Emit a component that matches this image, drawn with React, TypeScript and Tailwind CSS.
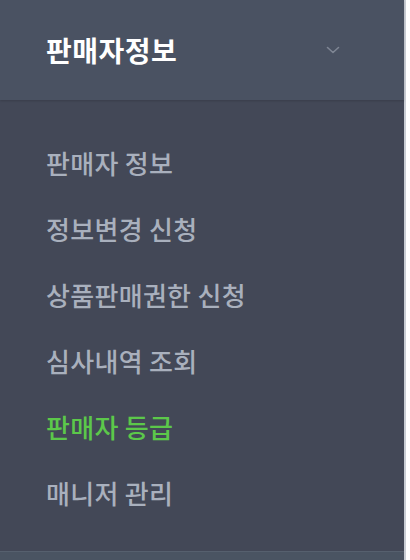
import React from "react";

const items = [
  { label: "판매자 정보", active: false },
  { label: "정보변경 신청", active: false },
  { label: "상품판매권한 신청", active: false },
  { label: "심사내역 조회", active: false },
  { label: "판매자 등급", active: true },
  { label: "매니저 관리", active: false },
];

export default function App() {
  return (
    <div
      className="w-[410px] h-[560px] bg-white flex overflow-hidden"
      style={{ fontFamily: '"Noto Sans CJK KR", "Noto Sans", sans-serif' }}
    >
      <div className="w-[406px] h-full flex flex-col border-r-2 border-[#c9cdd4]">
        <div className="h-[100px] bg-[#4a5262] flex items-center justify-between pl-[46px] pr-[64px] shadow-[0_1px_2px_rgba(0,0,0,0.15)] relative">
          <span className="text-white font-bold text-[28px] tracking-[0.5px] leading-none">판매자정보</span>
          <svg width="14" height="8" viewBox="0 0 14 8" fill="none">
            <path d="M1.5 1.5 L7 6.5 L12.5 1.5" stroke="#7f8694" strokeWidth="1.6" strokeLinecap="round" strokeLinejoin="round" />
          </svg>
        </div>
        <div className="flex-1 bg-[#434857] flex flex-col pt-[30px]">
          {items.map((it) => (
            <div key={it.label} className="h-[66px] flex items-center pl-[46px]">
              <span
                className={
                  "text-[26px] leading-none font-medium tracking-[0.3px] " +
                  (it.active ? "text-[#5cc84a]" : "text-[#a9b0bd]")
                }
              >
                {it.label}
              </span>
            </div>
          ))}
        </div>
        <div className="h-[9px] bg-[#4a5462] border-t border-[#56606e]" />
      </div>
    </div>
  );
}
